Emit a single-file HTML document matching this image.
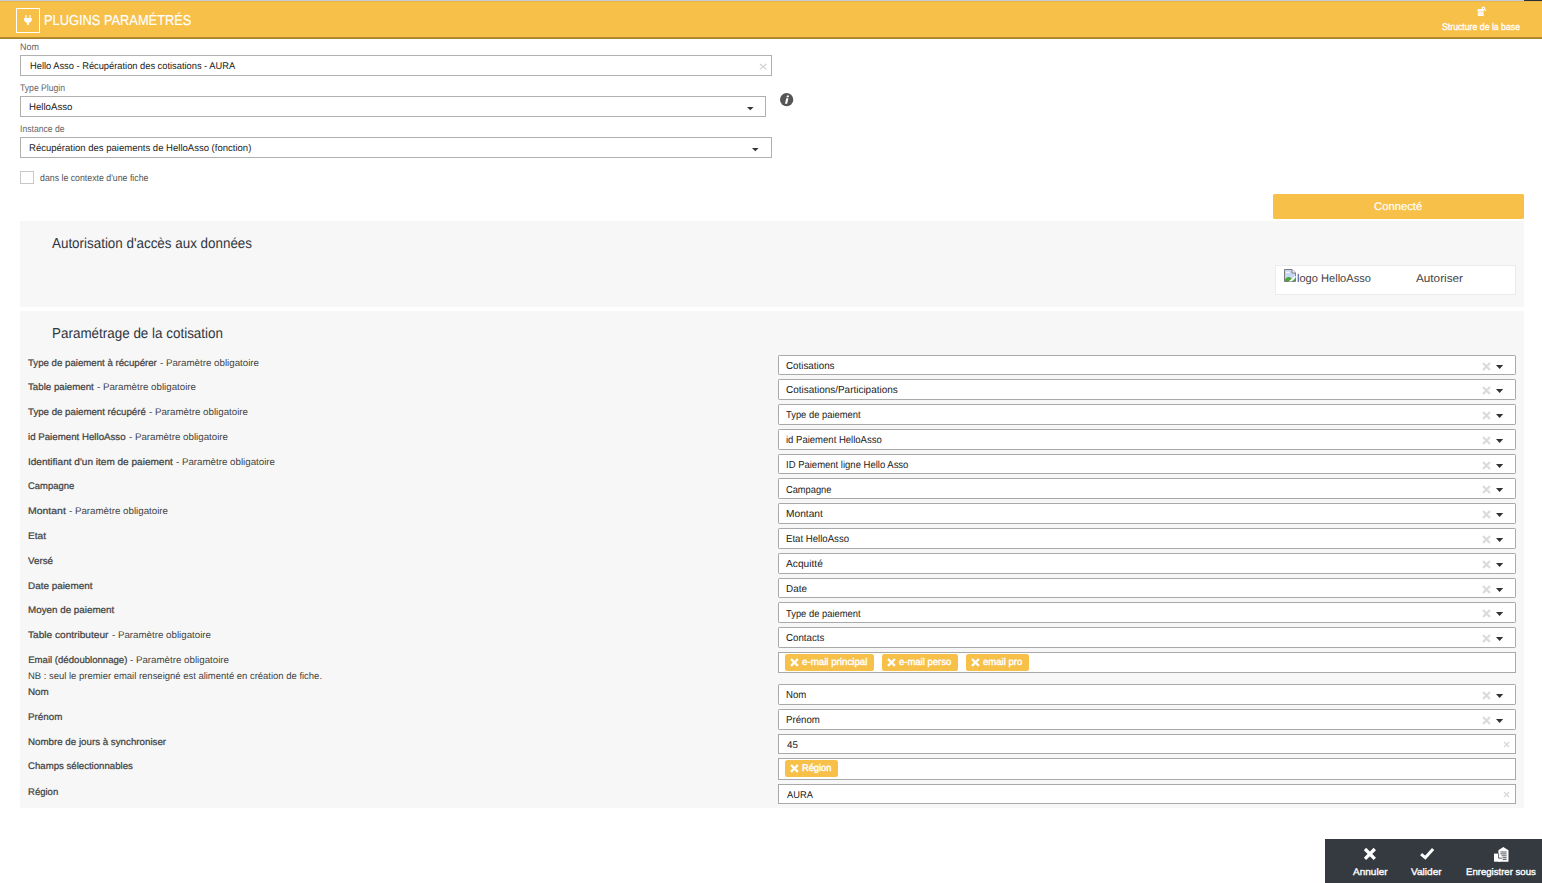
<!DOCTYPE html>
<html lang="fr"><head><meta charset="utf-8"><title>Plugins paramétrés</title>
<style>
html,body{margin:0;padding:0;background:#fff;}
body{width:1542px;height:883px;position:relative;overflow:hidden;font-family:"Liberation Sans", "DejaVu Sans", sans-serif;text-rendering:geometricPrecision;}
.b{position:absolute;box-sizing:border-box;}
.t{position:absolute;white-space:nowrap;line-height:20px;height:20px;transform-origin:0 0;}
svg{position:absolute;overflow:visible;}
</style></head><body>
<header>
<div class="b" style="left:0px;top:0px;width:1542px;height:37px;background:#f7c049;"></div>
<div class="b" style="left:0px;top:37px;width:1542px;height:1px;background:#b88c30;"></div>
<div class="b" style="left:0px;top:38px;width:1542px;height:1px;background:#a88029;"></div>
<div class="b" style="left:0px;top:1px;width:1542px;height:1px;background:#eab545;"></div>
<div class="b" style="left:0px;top:0px;width:1524px;height:1px;background:#c6cad2;"></div>
<div class="b" style="left:1524px;top:0px;width:18px;height:1px;background:#2b3036;"></div>
<div class="b" style="left:16px;top:8px;width:24px;height:25px;background:transparent;border:1px solid #fff;"></div>
<svg style="left:24.4px;top:15px" width="7.8" height="10" viewBox="0 0 7.8 10"><path d="M1.3 0h1.2v3h-1.2zM5.3 0h1.2v3h-1.2zM0 3h7.8v1.6c0 1.7-1.2 2.8-2.9 3.1V10h-2V7.7C1.2 7.4 0 6.3 0 4.6z" fill="#fff"/></svg>
<div class="t" style="left:43.6px;top:11px;font-size:14.4px;color:#fff;-webkit-text-stroke:0.2px #fff;transform:scaleX(0.8919);">PLUGINS PARAMÉTRÉS</div>
<div class="t" style="left:1442px;top:18px;font-size:9.7px;color:#fff;-webkit-text-stroke:0.3px #fff;transform:scaleX(0.8996);">Structure de la base</div>
<svg style="left:1477px;top:6px" width="10" height="11" viewBox="0 0 10 11"><path d="M0.6 3.1h4.4l1.6 1.2l0.4 1.1H0.6z" fill="#fff"/><rect x="0.8" y="5.6" width="5.8" height="1.3" fill="#fff" opacity="0.85"/><rect x="0.6" y="7" width="6.4" height="3.1" rx="1.5" fill="#fff"/><rect x="2" y="8.35" width="3.6" height="0.45" fill="#f7c049" opacity="0.6"/><circle cx="6.4" cy="2.4" r="1.3" fill="#f7c049" stroke="#fff" stroke-width="1.1"/><path d="M7.4 3.4L9 4.9" stroke="#fff" stroke-width="1.1"/></svg>
</header>
<main>
<form>
<div class="t" style="left:20.3px;top:38px;font-size:9.6px;color:#666;transform:scaleX(0.9375);">Nom</div>
<div class="b" style="left:20px;top:55px;width:752px;height:21px;background:#fff;border:1px solid #b0b0b0;"></div>
<div class="t" style="left:29.7px;top:57px;font-size:9.7px;color:#222;transform:scaleX(0.9595);">Hello Asso - Récupération des cotisations - AURA</div>
<svg style="left:760.2px;top:64.3px" width="6.4" height="5.4" viewBox="-3.2 -2.7 6.4 5.4"><path d="M-3.2 -2.7L3.2 2.7M3.2 -2.7L-3.2 2.7" stroke="#d2d2d2" stroke-width="1.25" fill="none"/></svg>
<div class="t" style="left:20.3px;top:79px;font-size:9.6px;color:#666;transform:scaleX(0.8975);">Type Plugin</div>
<div class="b" style="left:20px;top:96px;width:746px;height:21px;background:#fff;border:1px solid #b0b0b0;"></div>
<div class="t" style="left:28.5px;top:98px;font-size:9.7px;color:#222;transform:scaleX(0.9948);">HelloAsso</div>
<svg style="left:746.5px;top:106.95px" width="6.6" height="3.3" viewBox="0 0 6.6 3.3"><path d="M0 0H6.6L3.3 3.3Z" fill="#333"/></svg>
<svg style="left:779.9px;top:93.2px" width="13.3" height="13.3" viewBox="0 0 14 14"><circle cx="7" cy="7" r="7" fill="#555"/><path d="M7.3 2.6h2.3l-0.5 1.9H6.8zM6.6 5.4h2.3l-1.4 5.8H5.2z" fill="#fff"/></svg>
<div class="t" style="left:20.3px;top:120px;font-size:9.6px;color:#666;transform:scaleX(0.8990);">Instance de</div>
<div class="b" style="left:20px;top:137px;width:752px;height:21px;background:#fff;border:1px solid #b0b0b0;"></div>
<div class="t" style="left:28.5px;top:139px;font-size:9.7px;color:#222;transform:scaleX(0.9829);">Récupération des paiements de HelloAsso (fonction)</div>
<svg style="left:752.1px;top:147.9px" width="6.6" height="3.3" viewBox="0 0 6.6 3.3"><path d="M0 0H6.6L3.3 3.3Z" fill="#333"/></svg>
<div class="b" style="left:20px;top:171px;width:14px;height:13px;background:#fff;border:1px solid #c8c8c8;"></div>
<div class="t" style="left:40px;top:169px;font-size:9.6px;color:#555;transform:scaleX(0.9137);">dans le contexte d'une fiche</div>
</form>
<div class="b" style="left:1273px;top:194px;width:251px;height:25px;background:#f7c049;border-radius:1.5px;"></div>
<div class="t" style="left:1374.3px;top:197px;font-size:11.2px;color:#fff;-webkit-text-stroke:0.2px #fff;transform:scaleX(1.0061);">Connecté</div>
<section>
<div class="b" style="left:20px;top:221px;width:1504px;height:86px;background:#f7f7f7;"></div>
<div class="t" style="left:52px;top:234px;font-size:14.4px;color:#2f3640;transform:scaleX(0.9313);">Autorisation d'accès aux données</div>
<div class="b" style="left:1275px;top:265px;width:241px;height:30px;background:#fff;border:1px solid #ebebeb;"></div>
<svg style="left:1284px;top:269px" width="12" height="13" viewBox="0 0 12 13"><path d="M0.5 0.5H8L11.5 4V12.5H0.5Z" fill="#c7d8f4" stroke="#7b7b7b" stroke-width="1"/><path d="M8 0.5V4H11.5" fill="#fff" stroke="#7b7b7b" stroke-width="1"/><path d="M2 3.8c0-1 1.2-1.3 1.7-0.7c0.8-0.6 2 0 1.8 0.9z" fill="#fff"/><path d="M1 12V10.5C1.8 8.2 4.2 7.4 6 8.2C7 8.6 7.6 9.4 8 10L6 12Z" fill="#4aa935"/><path d="M8.4 12L11 9.6V12Z" fill="#4aa935"/><path d="M4.6 12.6L11.6 6.4L11.6 8.6L7.4 12.6Z" fill="#fff"/></svg>
<div class="t" style="left:1296.9px;top:269px;font-size:11.2px;color:#444;transform:scaleX(0.9901);">logo HelloAsso</div>
<div class="t" style="left:1415.8px;top:269px;font-size:11.2px;color:#444;transform:scaleX(1.0495);">Autoriser</div>
</section>
<section>
<div class="b" style="left:20px;top:311px;width:1504px;height:497px;background:#f7f7f7;"></div>
<div class="t" style="left:52px;top:324px;font-size:14.4px;color:#2f3640;transform:scaleX(0.9335);">Paramétrage de la cotisation</div>
<div class="t" style="left:28.2px;top:354px;font-size:9.6px;color:#444;-webkit-text-stroke:0.24px #444;transform:scaleX(1.0063);">Type de paiement à récupérer</div>
<div class="t" style="left:160px;top:354px;font-size:9.6px;color:#444;transform:scaleX(1.0144);">- Paramètre obligatoire</div>
<div class="b" style="left:778px;top:355px;width:738px;height:20px;background:#fff;border:1px solid #a9a9a9;border-radius:1.2px;"></div>
<div class="t" style="left:786px;top:357px;font-size:10.2px;color:#222;transform:scaleX(0.9622);">Cotisations</div>
<svg style="left:1483px;top:362.5px" width="7" height="7" viewBox="-3.5 -3.5 7 7"><path d="M-3.5 -3.5L3.5 3.5M3.5 -3.5L-3.5 3.5" stroke="#dbdbdb" stroke-width="2.2" fill="none"/></svg>
<svg style="left:1495.8px;top:364.85px" width="7.2" height="4.1" viewBox="0 0 7.2 4.1"><path d="M0 0H7.2L3.6 4.1Z" fill="#333"/></svg>
<div class="t" style="left:28.2px;top:378px;font-size:9.6px;color:#444;-webkit-text-stroke:0.24px #444;transform:scaleX(1.0111);">Table paiement</div>
<div class="t" style="left:97px;top:378px;font-size:9.6px;color:#444;transform:scaleX(1.0144);">- Paramètre obligatoire</div>
<div class="b" style="left:778px;top:379px;width:738px;height:21px;background:#fff;border:1px solid #a9a9a9;border-radius:1.2px;"></div>
<div class="t" style="left:786px;top:381px;font-size:10.2px;color:#222;transform:scaleX(0.9765);">Cotisations/Participations</div>
<svg style="left:1483px;top:386.5px" width="7" height="7" viewBox="-3.5 -3.5 7 7"><path d="M-3.5 -3.5L3.5 3.5M3.5 -3.5L-3.5 3.5" stroke="#dbdbdb" stroke-width="2.2" fill="none"/></svg>
<svg style="left:1495.8px;top:388.85px" width="7.2" height="4.1" viewBox="0 0 7.2 4.1"><path d="M0 0H7.2L3.6 4.1Z" fill="#333"/></svg>
<div class="t" style="left:28.2px;top:403px;font-size:9.6px;color:#444;-webkit-text-stroke:0.24px #444;transform:scaleX(1.0085);">Type de paiement récupéré</div>
<div class="t" style="left:148.6px;top:403px;font-size:9.6px;color:#444;transform:scaleX(1.0144);">- Paramètre obligatoire</div>
<div class="b" style="left:778px;top:404px;width:738px;height:21px;background:#fff;border:1px solid #a9a9a9;border-radius:1.2px;"></div>
<div class="t" style="left:786px;top:406px;font-size:10.2px;color:#222;transform:scaleX(0.9210);">Type de paiement</div>
<svg style="left:1483px;top:411.5px" width="7" height="7" viewBox="-3.5 -3.5 7 7"><path d="M-3.5 -3.5L3.5 3.5M3.5 -3.5L-3.5 3.5" stroke="#dbdbdb" stroke-width="2.2" fill="none"/></svg>
<svg style="left:1495.8px;top:413.85px" width="7.2" height="4.1" viewBox="0 0 7.2 4.1"><path d="M0 0H7.2L3.6 4.1Z" fill="#333"/></svg>
<div class="t" style="left:28.2px;top:428px;font-size:9.6px;color:#444;-webkit-text-stroke:0.24px #444;transform:scaleX(1.0111);">id Paiement HelloAsso</div>
<div class="t" style="left:128.5px;top:428px;font-size:9.6px;color:#444;transform:scaleX(1.0144);">- Paramètre obligatoire</div>
<div class="b" style="left:778px;top:429px;width:738px;height:21px;background:#fff;border:1px solid #a9a9a9;border-radius:1.2px;"></div>
<div class="t" style="left:786px;top:431px;font-size:10.2px;color:#222;transform:scaleX(0.9346);">id Paiement HelloAsso</div>
<svg style="left:1483px;top:436.5px" width="7" height="7" viewBox="-3.5 -3.5 7 7"><path d="M-3.5 -3.5L3.5 3.5M3.5 -3.5L-3.5 3.5" stroke="#dbdbdb" stroke-width="2.2" fill="none"/></svg>
<svg style="left:1495.8px;top:438.85px" width="7.2" height="4.1" viewBox="0 0 7.2 4.1"><path d="M0 0H7.2L3.6 4.1Z" fill="#333"/></svg>
<div class="t" style="left:28.2px;top:453px;font-size:9.6px;color:#444;-webkit-text-stroke:0.24px #444;transform:scaleX(1.0464);">Identifiant d'un item de paiement</div>
<div class="t" style="left:175.8px;top:453px;font-size:9.6px;color:#444;transform:scaleX(1.0144);">- Paramètre obligatoire</div>
<div class="b" style="left:778px;top:454px;width:738px;height:20px;background:#fff;border:1px solid #a9a9a9;border-radius:1.2px;"></div>
<div class="t" style="left:786px;top:456px;font-size:10.2px;color:#222;transform:scaleX(0.9317);">ID Paiement ligne Hello Asso</div>
<svg style="left:1483px;top:461.5px" width="7" height="7" viewBox="-3.5 -3.5 7 7"><path d="M-3.5 -3.5L3.5 3.5M3.5 -3.5L-3.5 3.5" stroke="#dbdbdb" stroke-width="2.2" fill="none"/></svg>
<svg style="left:1495.8px;top:463.85px" width="7.2" height="4.1" viewBox="0 0 7.2 4.1"><path d="M0 0H7.2L3.6 4.1Z" fill="#333"/></svg>
<div class="t" style="left:28.2px;top:477px;font-size:9.6px;color:#444;-webkit-text-stroke:0.24px #444;transform:scaleX(0.9843);">Campagne</div>
<div class="b" style="left:778px;top:478px;width:738px;height:21px;background:#fff;border:1px solid #a9a9a9;border-radius:1.2px;"></div>
<div class="t" style="left:786px;top:481px;font-size:10.2px;color:#222;transform:scaleX(0.9108);">Campagne</div>
<svg style="left:1483px;top:486.1px" width="7" height="7" viewBox="-3.5 -3.5 7 7"><path d="M-3.5 -3.5L3.5 3.5M3.5 -3.5L-3.5 3.5" stroke="#dbdbdb" stroke-width="2.2" fill="none"/></svg>
<svg style="left:1495.8px;top:488.45px" width="7.2" height="4.1" viewBox="0 0 7.2 4.1"><path d="M0 0H7.2L3.6 4.1Z" fill="#333"/></svg>
<div class="t" style="left:28.2px;top:502px;font-size:9.6px;color:#444;-webkit-text-stroke:0.24px #444;transform:scaleX(1.0902);">Montant</div>
<div class="t" style="left:68.7px;top:502px;font-size:9.6px;color:#444;transform:scaleX(1.0144);">- Paramètre obligatoire</div>
<div class="b" style="left:778px;top:503px;width:738px;height:21px;background:#fff;border:1px solid #a9a9a9;border-radius:1.2px;"></div>
<div class="t" style="left:786px;top:505px;font-size:10.2px;color:#222;">Montant</div>
<svg style="left:1483px;top:510.5px" width="7" height="7" viewBox="-3.5 -3.5 7 7"><path d="M-3.5 -3.5L3.5 3.5M3.5 -3.5L-3.5 3.5" stroke="#dbdbdb" stroke-width="2.2" fill="none"/></svg>
<svg style="left:1495.8px;top:512.85px" width="7.2" height="4.1" viewBox="0 0 7.2 4.1"><path d="M0 0H7.2L3.6 4.1Z" fill="#333"/></svg>
<div class="t" style="left:28.2px;top:527px;font-size:9.6px;color:#444;-webkit-text-stroke:0.24px #444;transform:scaleX(1.0598);">Etat</div>
<div class="b" style="left:778px;top:528px;width:738px;height:21px;background:#fff;border:1px solid #a9a9a9;border-radius:1.2px;"></div>
<div class="t" style="left:786px;top:530px;font-size:10.2px;color:#222;transform:scaleX(0.9442);">Etat HelloAsso</div>
<svg style="left:1483px;top:535.5px" width="7" height="7" viewBox="-3.5 -3.5 7 7"><path d="M-3.5 -3.5L3.5 3.5M3.5 -3.5L-3.5 3.5" stroke="#dbdbdb" stroke-width="2.2" fill="none"/></svg>
<svg style="left:1495.8px;top:537.85px" width="7.2" height="4.1" viewBox="0 0 7.2 4.1"><path d="M0 0H7.2L3.6 4.1Z" fill="#333"/></svg>
<div class="t" style="left:28.2px;top:552px;font-size:9.6px;color:#444;-webkit-text-stroke:0.24px #444;transform:scaleX(1.0185);">Versé</div>
<div class="b" style="left:778px;top:553px;width:738px;height:21px;background:#fff;border:1px solid #a9a9a9;border-radius:1.2px;"></div>
<div class="t" style="left:786px;top:555px;font-size:10.2px;color:#222;">Acquitté</div>
<svg style="left:1483px;top:560.5px" width="7" height="7" viewBox="-3.5 -3.5 7 7"><path d="M-3.5 -3.5L3.5 3.5M3.5 -3.5L-3.5 3.5" stroke="#dbdbdb" stroke-width="2.2" fill="none"/></svg>
<svg style="left:1495.8px;top:562.85px" width="7.2" height="4.1" viewBox="0 0 7.2 4.1"><path d="M0 0H7.2L3.6 4.1Z" fill="#333"/></svg>
<div class="t" style="left:28.2px;top:577px;font-size:9.6px;color:#444;-webkit-text-stroke:0.24px #444;transform:scaleX(1.0319);">Date paiement</div>
<div class="b" style="left:778px;top:578px;width:738px;height:20px;background:#fff;border:1px solid #a9a9a9;border-radius:1.2px;"></div>
<div class="t" style="left:786px;top:580px;font-size:10.2px;color:#222;transform:scaleX(0.9707);">Date</div>
<svg style="left:1483px;top:585.5px" width="7" height="7" viewBox="-3.5 -3.5 7 7"><path d="M-3.5 -3.5L3.5 3.5M3.5 -3.5L-3.5 3.5" stroke="#dbdbdb" stroke-width="2.2" fill="none"/></svg>
<svg style="left:1495.8px;top:587.85px" width="7.2" height="4.1" viewBox="0 0 7.2 4.1"><path d="M0 0H7.2L3.6 4.1Z" fill="#333"/></svg>
<div class="t" style="left:28.2px;top:601px;font-size:9.6px;color:#444;-webkit-text-stroke:0.24px #444;transform:scaleX(1.0230);">Moyen de paiement</div>
<div class="b" style="left:778px;top:602px;width:738px;height:21px;background:#fff;border:1px solid #a9a9a9;border-radius:1.2px;"></div>
<div class="t" style="left:786px;top:605px;font-size:10.2px;color:#222;transform:scaleX(0.9210);">Type de paiement</div>
<svg style="left:1483px;top:610.1px" width="7" height="7" viewBox="-3.5 -3.5 7 7"><path d="M-3.5 -3.5L3.5 3.5M3.5 -3.5L-3.5 3.5" stroke="#dbdbdb" stroke-width="2.2" fill="none"/></svg>
<svg style="left:1495.8px;top:612.45px" width="7.2" height="4.1" viewBox="0 0 7.2 4.1"><path d="M0 0H7.2L3.6 4.1Z" fill="#333"/></svg>
<div class="t" style="left:28.2px;top:626px;font-size:9.6px;color:#444;-webkit-text-stroke:0.24px #444;transform:scaleX(1.0542);">Table contributeur</div>
<div class="t" style="left:111.5px;top:626px;font-size:9.6px;color:#444;transform:scaleX(1.0144);">- Paramètre obligatoire</div>
<div class="b" style="left:778px;top:627px;width:738px;height:21px;background:#fff;border:1px solid #a9a9a9;border-radius:1.2px;"></div>
<div class="t" style="left:786px;top:629px;font-size:10.2px;color:#222;transform:scaleX(0.9551);">Contacts</div>
<svg style="left:1483px;top:634.5px" width="7" height="7" viewBox="-3.5 -3.5 7 7"><path d="M-3.5 -3.5L3.5 3.5M3.5 -3.5L-3.5 3.5" stroke="#dbdbdb" stroke-width="2.2" fill="none"/></svg>
<svg style="left:1495.8px;top:636.85px" width="7.2" height="4.1" viewBox="0 0 7.2 4.1"><path d="M0 0H7.2L3.6 4.1Z" fill="#333"/></svg>
<div class="t" style="left:28.2px;top:651px;font-size:9.6px;color:#444;-webkit-text-stroke:0.24px #444;">Email (dédoublonnage)</div>
<div class="t" style="left:129.9px;top:651px;font-size:9.6px;color:#444;transform:scaleX(1.0144);">- Paramètre obligatoire</div>
<div class="b" style="left:778px;top:652px;width:738px;height:21px;background:#fff;border:1px solid #a9a9a9;"></div>
<div class="t" style="left:28.2px;top:683px;font-size:9.6px;color:#444;-webkit-text-stroke:0.24px #444;transform:scaleX(1.0264);">Nom</div>
<div class="b" style="left:778px;top:684px;width:738px;height:21px;background:#fff;border:1px solid #a9a9a9;border-radius:1.2px;"></div>
<div class="t" style="left:786px;top:686px;font-size:10.2px;color:#222;transform:scaleX(0.9435);">Nom</div>
<svg style="left:1483px;top:691.5px" width="7" height="7" viewBox="-3.5 -3.5 7 7"><path d="M-3.5 -3.5L3.5 3.5M3.5 -3.5L-3.5 3.5" stroke="#dbdbdb" stroke-width="2.2" fill="none"/></svg>
<svg style="left:1495.8px;top:693.85px" width="7.2" height="4.1" viewBox="0 0 7.2 4.1"><path d="M0 0H7.2L3.6 4.1Z" fill="#333"/></svg>
<div class="t" style="left:28.2px;top:708px;font-size:9.6px;color:#444;-webkit-text-stroke:0.24px #444;transform:scaleX(1.0210);">Prénom</div>
<div class="b" style="left:778px;top:709px;width:738px;height:21px;background:#fff;border:1px solid #a9a9a9;border-radius:1.2px;"></div>
<div class="t" style="left:786px;top:711px;font-size:10.2px;color:#222;transform:scaleX(0.9503);">Prénom</div>
<svg style="left:1483px;top:716.5px" width="7" height="7" viewBox="-3.5 -3.5 7 7"><path d="M-3.5 -3.5L3.5 3.5M3.5 -3.5L-3.5 3.5" stroke="#dbdbdb" stroke-width="2.2" fill="none"/></svg>
<svg style="left:1495.8px;top:718.85px" width="7.2" height="4.1" viewBox="0 0 7.2 4.1"><path d="M0 0H7.2L3.6 4.1Z" fill="#333"/></svg>
<div class="t" style="left:28.2px;top:733px;font-size:9.6px;color:#444;-webkit-text-stroke:0.24px #444;transform:scaleX(1.0156);">Nombre de jours à synchroniser</div>
<div class="b" style="left:778px;top:734px;width:738px;height:20px;background:#fff;border:1px solid #a9a9a9;"></div>
<div class="t" style="left:786.9px;top:736px;font-size:9.7px;color:#222;transform:scaleX(1.0110);">45</div>
<svg style="left:1504.4px;top:742px" width="5.2" height="5.2" viewBox="-2.6 -2.6 5.2 5.2"><path d="M-2.6 -2.6L2.6 2.6M2.6 -2.6L-2.6 2.6" stroke="#d4d4d4" stroke-width="1.1" fill="none"/></svg>
<div class="t" style="left:28.2px;top:757px;font-size:9.6px;color:#444;-webkit-text-stroke:0.24px #444;transform:scaleX(1.0026);">Champs sélectionnables</div>
<div class="b" style="left:778px;top:758px;width:738px;height:22px;background:#fff;border:1px solid #a9a9a9;"></div>
<div class="t" style="left:28.2px;top:783px;font-size:9.6px;color:#444;-webkit-text-stroke:0.24px #444;transform:scaleX(0.9932);">Région</div>
<div class="b" style="left:778px;top:784px;width:738px;height:20px;background:#fff;border:1px solid #a9a9a9;"></div>
<div class="t" style="left:786.9px;top:786px;font-size:9.7px;color:#222;transform:scaleX(0.9620);">AURA</div>
<svg style="left:1504.4px;top:792px" width="5.2" height="5.2" viewBox="-2.6 -2.6 5.2 5.2"><path d="M-2.6 -2.6L2.6 2.6M2.6 -2.6L-2.6 2.6" stroke="#d4d4d4" stroke-width="1.1" fill="none"/></svg>
<div class="t" style="left:28.3px;top:667px;font-size:9.6px;color:#444;transform:scaleX(0.9863);">NB : seul le premier email renseigné est alimenté en création de fiche.</div>
<div class="b" style="left:785px;top:654px;width:88.9px;height:17px;background:#f7c049;border-radius:2.5px;"></div>
<svg style="left:791.15px;top:658.55px" width="6.9" height="6.9" viewBox="-3.45 -3.45 6.9 6.9"><path d="M-3.45 -3.45L3.45 3.45M3.45 -3.45L-3.45 3.45" stroke="#fff" stroke-width="2.3" fill="none"/></svg>
<div class="t" style="left:801.9px;top:653px;font-size:9.8px;color:#fff;-webkit-text-stroke:0.4px #fff;transform:scaleX(0.9926);">e-mail principal</div>
<div class="b" style="left:882px;top:654px;width:75.7px;height:17px;background:#f7c049;border-radius:2.5px;"></div>
<svg style="left:888.15px;top:658.55px" width="6.9" height="6.9" viewBox="-3.45 -3.45 6.9 6.9"><path d="M-3.45 -3.45L3.45 3.45M3.45 -3.45L-3.45 3.45" stroke="#fff" stroke-width="2.3" fill="none"/></svg>
<div class="t" style="left:898.9px;top:653px;font-size:9.8px;color:#fff;-webkit-text-stroke:0.4px #fff;transform:scaleX(0.9683);">e-mail perso</div>
<div class="b" style="left:966.1px;top:654px;width:62.7px;height:17px;background:#f7c049;border-radius:2.5px;"></div>
<svg style="left:972.25px;top:658.55px" width="6.9" height="6.9" viewBox="-3.45 -3.45 6.9 6.9"><path d="M-3.45 -3.45L3.45 3.45M3.45 -3.45L-3.45 3.45" stroke="#fff" stroke-width="2.3" fill="none"/></svg>
<div class="t" style="left:983px;top:653px;font-size:9.8px;color:#fff;-webkit-text-stroke:0.4px #fff;transform:scaleX(0.9728);">email pro</div>
<div class="b" style="left:785px;top:760px;width:52.9px;height:17px;background:#f7c049;border-radius:2.5px;"></div>
<svg style="left:791.15px;top:764.55px" width="6.9" height="6.9" viewBox="-3.45 -3.45 6.9 6.9"><path d="M-3.45 -3.45L3.45 3.45M3.45 -3.45L-3.45 3.45" stroke="#fff" stroke-width="2.3" fill="none"/></svg>
<div class="t" style="left:801.9px;top:759px;font-size:9.8px;color:#fff;-webkit-text-stroke:0.4px #fff;transform:scaleX(0.9470);">Région</div>
</section>
</main>
<footer>
<div class="b" style="left:1325px;top:839px;width:217px;height:44px;background:#343a40;"></div>
<svg style="left:1365.2px;top:849px" width="9.8" height="9.8" viewBox="-4.9 -4.9 9.8 9.8"><path d="M-4.9 -4.9L4.9 4.9M4.9 -4.9L-4.9 4.9" stroke="#fff" stroke-width="3.3" fill="none"/></svg>
<svg style="left:1418px;top:845.4px" width="18" height="16" viewBox="1418 846 18 16"><path d="M1421.1 855.1L1425.3 858.7L1433.1 849.9" fill="none" stroke="#fff" stroke-width="3" stroke-linejoin="miter"/></svg>
<svg style="left:1493.8px;top:846.6px" width="14.6" height="14.8" viewBox="0 0 14.6 14.8"><path d="M4.4 3.3L9.3 0L14.5 3.3V14.7H4.4Z" fill="#fff"/><path d="M0 6.6H6.3V14.7H0Z" fill="#fff"/><path d="M4.6 6.4V11.2H8" fill="none" stroke="#343a40" stroke-width="0.8"/><path d="M6.4 5h6.2M6.4 6.9h6.2M7.6 8.8h5M8.6 10.7h4M8.6 12.4h4" stroke="#343a40" stroke-width="0.85"/></svg>
<div class="t" style="left:1352.8px;top:863px;font-size:9.5px;color:#fff;-webkit-text-stroke:0.35px #fff;transform:scaleX(1.0565);">Annuler</div>
<div class="t" style="left:1411.2px;top:863px;font-size:9.5px;color:#fff;-webkit-text-stroke:0.35px #fff;transform:scaleX(1.0597);">Valider</div>
<div class="t" style="left:1466.3px;top:863px;font-size:9.5px;color:#fff;-webkit-text-stroke:0.35px #fff;transform:scaleX(1.0091);">Enregistrer sous</div>
</footer>
</body></html>
